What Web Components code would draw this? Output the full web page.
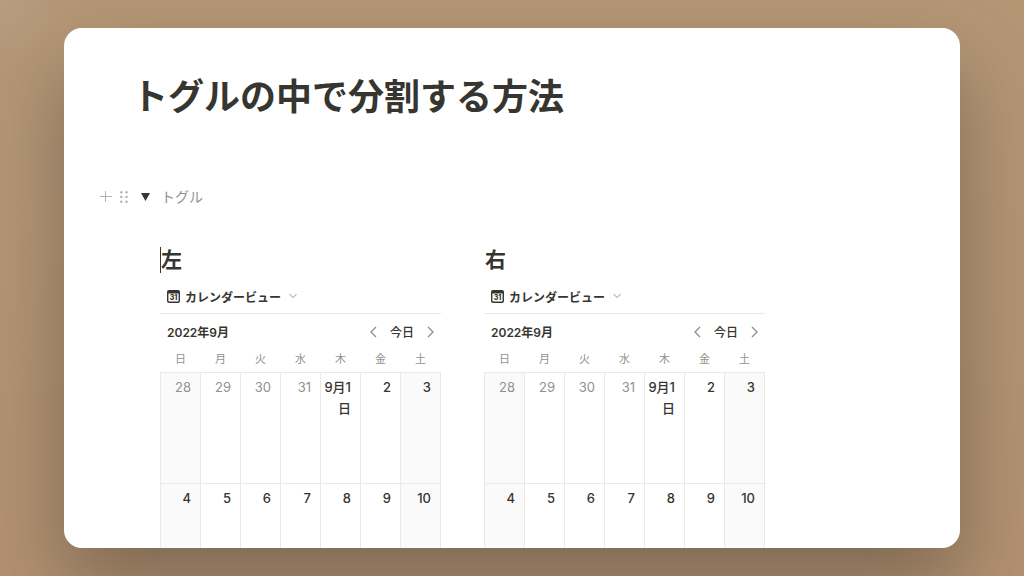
<!DOCTYPE html>
<html lang="ja">
<head>
<meta charset="utf-8">
<title>トグルの中で分割する方法</title>
<style>
  :root {
    --ink: #37352f;
    --muted: #92918d;
    --line: #e9e9e7;
    --weekend: #fbfafa;
  }

  body {
    margin: 0;
    min-height: 100vh;
    overflow: hidden;
    color: var(--ink);
    font-family: Inter, "Noto Sans CJK JP", sans-serif;
    background: radial-gradient(circle at 0 0, #b89d80, #b59776 70px, transparent 400px),
      linear-gradient(#b59776, #b29170);
  }
</style>
</head>
<body>
<doc-page>
  <span slot="title">トグルの中で分割する方法</span>
  <toggle-block label="トグル">
    <column-block heading="左" caret><calendar-view></calendar-view></column-block>
    <column-block heading="右"><calendar-view></calendar-view></column-block>
  </toggle-block>
</doc-page>

<script>
class DocPage extends HTMLElement {
  constructor() {
    super();
    this.attachShadow({ mode: "open" });
  }

  connectedCallback() {
    this.shadowRoot.innerHTML = `
      <style>
        :host {
          display: block;
          box-sizing: border-box;
          height: 100vh;
          padding: 28px 64px;
        }

        main {
          box-sizing: border-box;
          height: 100%;
          overflow: hidden;
          padding: 47px 36px 0;
          border-radius: 18px;
          background: #fff;
        }

        .shadow {
          height: 100%;
          border-radius: 18px;
          box-shadow: 0 40px 80px rgba(88, 74, 62, 0.55);
        }

        h1 {
          margin: 0 32px 65px;
          font-size: 36px;
          line-height: 44px;
          font-weight: 700;
        }
      </style>
      <div class="shadow">
        <main>
          <h1><slot name="title"></slot></h1>
          <slot></slot>
        </main>
      </div>
    `;
  }
}

class ToggleBlock extends HTMLElement {
  constructor() {
    super();
    this.attachShadow({ mode: "open" });
  }

  connectedCallback() {
    this.shadowRoot.innerHTML = `
      <style>
        :host {
          display: block;
        }

        .row {
          display: flex;
          align-items: center;
          height: 24px;
          font-size: 14px;
          color: var(--muted);
        }

        button {
          display: flex;
          padding: 0;
          border: none;
          background: none;
          color: #b4b3b0;
          cursor: pointer;
        }

        .drag {
          margin-left: 8px;
        }

        .toggle {
          margin: 0 11px 0 13px;
          color: var(--ink);
        }

        .content {
          display: grid;
          grid-template-columns: 1fr 1fr;
          gap: 43px;
          margin: 39px 159px 0 60px;
        }

        .content[hidden] {
          display: none;
        }
      </style>
      <div class="row">
        <button aria-label="追加">
          <svg width="12" height="12" viewBox="0 0 12 12" stroke="currentColor"><path d="M0 6.500h12M5.500 1v11"/></svg>
        </button>
        <button class="drag" aria-label="移動">
          <svg width="8" height="14" viewBox="0 0 8 14" fill="currentColor">
            <circle cx="1.3" cy="3.2" r="1.2"/><circle cx="6.5" cy="3.2" r="1.2"/>
            <circle cx="1.3" cy="8" r="1.2"/><circle cx="6.5" cy="8" r="1.2"/>
            <circle cx="1.3" cy="12.8" r="1.2"/><circle cx="6.5" cy="12.8" r="1.2"/>
          </svg>
        </button>
        <button class="toggle" aria-label="開閉" aria-expanded="true">
          <svg width="9" height="10" viewBox="0 0 9 10" fill="currentColor"><path d="M0 2h9L4.5 10z"/></svg>
        </button>
        <span>${this.getAttribute("label")}</span>
      </div>
      <div class="content"><slot></slot></div>
    `;

    const toggle = this.shadowRoot.querySelector(".toggle");
    const content = this.shadowRoot.querySelector(".content");
    toggle.addEventListener("click", () => {
      content.hidden = !content.hidden;
      toggle.setAttribute("aria-expanded", String(!content.hidden));
    });
  }
}

class ColumnBlock extends HTMLElement {
  constructor() {
    super();
    this.attachShadow({ mode: "open" });
  }

  connectedCallback() {
    this.shadowRoot.innerHTML = `
      <style>
        :host {
          display: block;
          min-width: 0;
        }

        h2 {
          margin: 0 0 6px;
          border-left: 1px solid transparent;
          font-size: 21px;
          line-height: 26px;
          font-weight: 600;
        }

        :host([caret]) h2 {
          border-color: var(--ink);
        }
      </style>
      <h2>${this.getAttribute("heading")}</h2>
      <slot></slot>
    `;
  }
}

const WEEKDAYS = ["日", "月", "火", "水", "木", "金", "土"];
const WEEKS = [
  ["28", "29", "30", "31", "9月1日", "2", "3"],
  ["4", "5", "6", "7", "8", "9", "10"],
];

class CalendarView extends HTMLElement {
  constructor() {
    super();
    this.attachShadow({ mode: "open" });
  }

  renderDay(day, week) {
    const other = week === 0 && Number(day) > 20;
    return `<td${other ? ' class="other"' : ""}>${day}</td>`;
  }

  connectedCallback() {
    this.shadowRoot.innerHTML = `
      <style>
        :host {
          display: block;
          font-size: 13px;
        }

        button {
          display: flex;
          align-items: center;
          padding: 0;
          border: none;
          background: none;
          color: var(--ink);
          font: inherit;
          cursor: pointer;
        }

        .tabs {
          display: flex;
          height: 34px;
          padding-left: 7px;
          border-bottom: 1px solid var(--line);
        }

        .tabs button {
          gap: 5px;
          font-size: 12px;
          font-weight: 600;
        }

        .tabs .chevron {
          margin-left: 3px;
        }

        .bar {
          display: flex;
          align-items: center;
          height: 35px;
          padding: 0 7px;
        }

        .month {
          margin-right: auto;
          font-size: 12px;
          font-weight: 600;
        }

        .bar button {
          font-size: 12px;
          font-weight: 500;
        }

        .today {
          margin: 0 13px;
        }

        .chevron {
          fill: none;
          stroke: #91918e;
        }

        table {
          width: 100%;
          table-layout: fixed;
          border-collapse: collapse;
        }

        th {
          padding: 0 0 3px;
          color: var(--muted);
          font-size: 11px;
          line-height: 20px;
          font-weight: 400;
        }

        td {
          box-sizing: border-box;
          height: 111px;
          padding: 4px 9px 0 3px;
          border: 1px solid var(--line);
          font-weight: 500;
          line-height: 21px;
          text-align: right;
          vertical-align: top;
        }

        td:first-child,
        td:last-child {
          background: var(--weekend);
        }

        .other {
          color: var(--muted);
          font-weight: 400;
        }
      </style>
      <div class="tabs">
        <button>
          <svg width="13" height="13" viewBox="0 0 13 13">
            <path fill="#37352f" fill-rule="evenodd" d="M2 0h9a2 2 0 0 1 2 2v9a2 2 0 0 1-2 2H2a2 2 0 0 1-2-2V2a2 2 0 0 1 2-2zM1.400 3.600v7c0 .6.400 1 1 1h8.200c.6 0 1-.4 1-1v-7z"/>
            <text x="6.500" y="10" font-size="7" font-weight="800" text-anchor="middle" fill="#37352f">31</text>
          </svg>
          カレンダービュー
          <svg class="chevron" width="8" height="6" viewBox="0 0 8 6"><path d="M.5 1L4 4.500 7.500 1"/></svg>
        </button>
      </div>
      <div class="bar">
        <span class="month">2022年9月</span>
        <button aria-label="前の月">
          <svg class="chevron" width="7" height="12" viewBox="0 0 7 12"><path stroke-width="1.400" d="M6 1L1 6l5 5"/></svg>
        </button>
        <button class="today">今日</button>
        <button aria-label="次の月">
          <svg class="chevron" width="7" height="12" viewBox="0 0 7 12"><path stroke-width="1.400" d="M1 1l5 5-5 5"/></svg>
        </button>
      </div>
      <table>
        <thead>
          <tr>${WEEKDAYS.map((name) => `<th scope="col">${name}</th>`).join("")}</tr>
        </thead>
        <tbody>
          ${WEEKS.map((days, week) => `<tr>${days.map((day) => this.renderDay(day, week)).join("")}</tr>`).join("")}
        </tbody>
      </table>
    `;
  }
}

customElements.define("doc-page", DocPage);
customElements.define("toggle-block", ToggleBlock);
customElements.define("column-block", ColumnBlock);
customElements.define("calendar-view", CalendarView);
</script>
</body>
</html>
